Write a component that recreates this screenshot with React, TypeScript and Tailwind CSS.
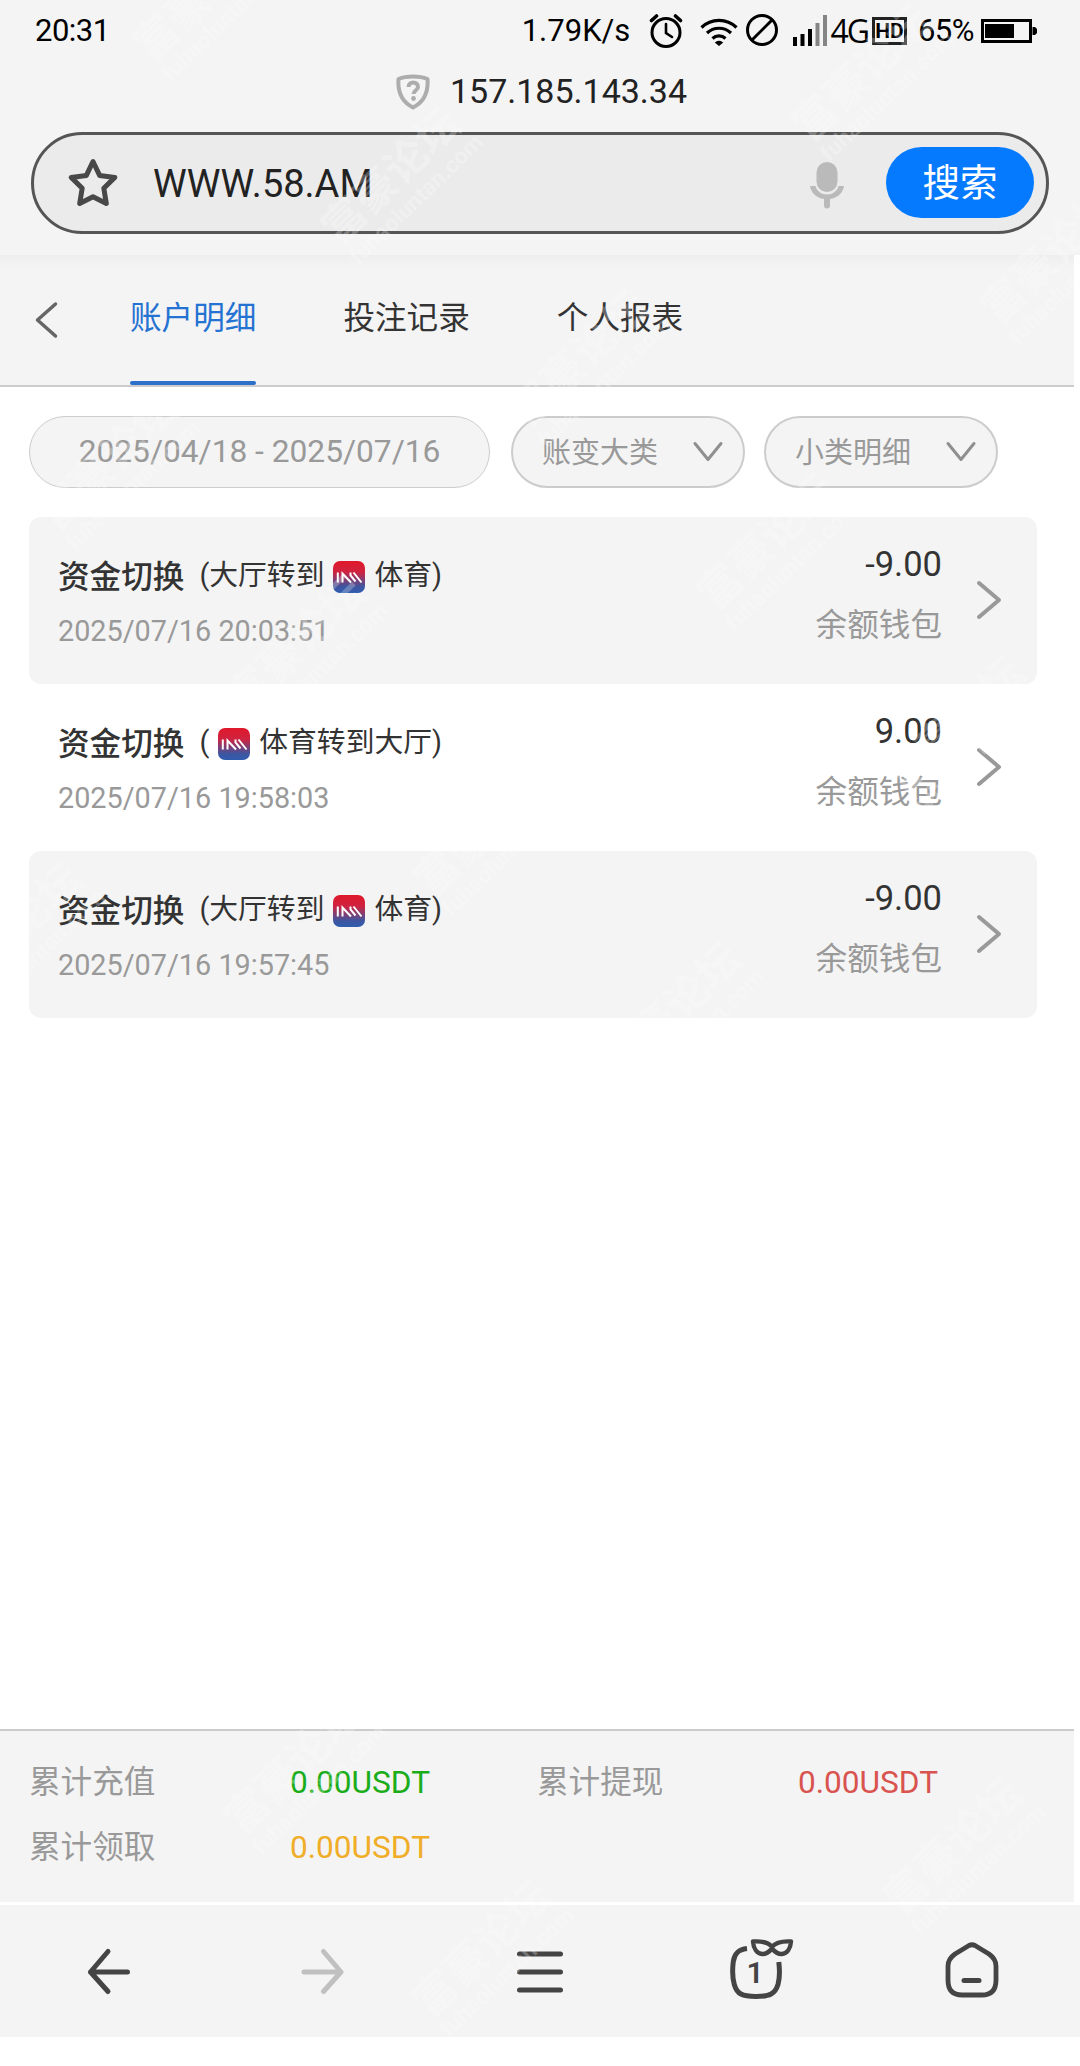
const records = [
  { from: '大厅转到', to: '体育', time: '2025/07/16 20:03:51', amount: '-9.00' },
  { from: '', to: '体育转到大厅', time: '2025/07/16 19:58:03', amount: '9.00' },
  { from: '大厅转到', to: '体育', time: '2025/07/16 19:57:45', amount: '-9.00' },
];

const tabs = ['账户明细', '投注记录', '个人报表'];

const totals = [
  { label: '累计充值', value: '0.00USDT', color: 'text-[#1aad19]' },
  { label: '累计提现', value: '0.00USDT', color: 'text-[#d9534f]' },
  { label: '累计领取', value: '0.00USDT', color: 'text-[#f0ad27]' },
];

// Diagonal watermark grid, skipped where the page is plain white
const marks: { x: number; y: number }[] = [];
for (let a = -5; a <= 3; a++) {
  for (let b = -2; b <= 10; b++) {
    const x = 313 + a * 471 + b * 188;
    const y = 219 - a * 103 + b * 183;
    const blank = y > 1130 && y < 1720;
    if (x > -130 && x < 1050 && y > 20 && y < 2080 && !blank) marks.push({ x, y });
  }
}

const StatusBar = () => (
  <div className="flex h-[62px] items-center pl-[35px] pr-[43px] text-[31px] leading-[62px] text-black">
    <span className="tracking-[-0.5px]">20:31</span>
    <span className="ml-auto">1.79K/s</span>
    <svg className="ml-[19px]" width="34" height="34" viewBox="0 0 34 34" fill="none" stroke="currentColor" strokeWidth="3" strokeLinecap="round">
      <circle cx="17" cy="18.5" r="14" />
      <path d="M17 10v9l6 4" strokeWidth="2.6" />
      <path d="M2.5 6.5l5-4.5M31.5 6.5l-5-4.5" strokeWidth="3.6" />
    </svg>
    <svg className="ml-[17px]" width="38" height="30" viewBox="0 0 38 30" fill="none" stroke="currentColor" strokeWidth="3.2">
      <path d="M1.5 11.5a25 25 0 0 1 35 0" />
      <path d="M7 17a17.500 17.500 0 0 1 24 0" />
      <path d="M12.500 22.500a9.500 9.500 0 0 1 13 0" />
      <path d="M16 26.500q3-2 6 0l-3 2.500z" fill="currentColor" strokeWidth="1.500" />
    </svg>
    <svg className="ml-[7px] mt-[-2px]" width="34" height="34" viewBox="0 0 34 34" fill="none" stroke="currentColor" strokeWidth="3">
      <circle cx="17" cy="17" r="14.500" />
      <path d="M7 27L27 7" />
    </svg>
    <svg className="ml-[14px] mt-[-2px]" width="35" height="32" viewBox="0 0 35 32">
      <path d="M0 23h4v9H0zM7.500 20h4v12h-4zM15 15h4v17h-4z" />
      <path d="M22.500 9h4v23h-4zM30 1h4v31h-4z" fill="#858585" />
    </svg>
    <span className="ml-[2px] font-['Open_Sans'] text-[32px] font-medium tracking-[-2px]">4G</span>
    <span className="ml-[4px] mt-[-1px] flex h-[28px] w-[35px] items-center justify-center border-[3px] border-[#222] text-[21px] font-bold leading-[22px]">
      HD
    </span>
    <span className="ml-[11px] tracking-[-0.5px]">65%</span>
    <svg className="ml-[7px]" width="56" height="24" viewBox="0 0 56 24">
      <rect x="1.500" y="1.500" width="48" height="21" fill="none" stroke="currentColor" strokeWidth="3" />
      <path d="M4 5h29v14H4zM51.500 8H54l2 2v4l-2 2h-2.500z" />
    </svg>
  </div>
);

const AddressBar = () => (
  <div className="mx-[31px] mt-[14px] flex h-[102px] w-[1018px] items-center rounded-full border-[3px] border-[#555] bg-[#ebebeb] pl-[33px] pr-[12px]">
    <svg width="52" height="52" viewBox="0 0 52 52" fill="none" stroke="#484848" strokeWidth="5" strokeLinejoin="round">
      <path d="M26 4.500l6.600 13.900 15.200 2-11 10.800 2.500 15.300L26 39.700 12.700 46.500l2.500-15.300-11-10.800 15.200-2z" />
    </svg>
    <span className="ml-[34px] mt-[1px] text-[38px] leading-[46px] text-[#222]">WWW.58.AM</span>
    <svg className="ml-auto mt-[3px]" width="36" height="48" viewBox="0 0 36 48" fill="#bababa">
      <rect x="7.500" y="1" width="21" height="30" rx="10.500" />
      <path d="M1 25h5.500c1.500 5.500 6 8.500 11.500 8.500S28 30.500 29.500 25H35c-1 7-6.500 12-14 13v6.500a2.500 2.500 0 0 1-6 0V38C7.500 37 2 32 1 25z" />
    </svg>
    <button className="ml-[41px] mt-[-1px] h-[71px] w-[148px] rounded-full bg-[#057aff] text-[37.500px] leading-[62px] text-white">
      搜索
    </button>
  </div>
);

const TabHeader = () => (
  <div className="w-[1074px] border-b-2 border-[#ccc] bg-[#f4f4f4]">
    <div className="flex h-[130px] bg-gradient-to-b from-[#eeeeee] to-[#f4f4f4] to-10% pl-[34px]">
      <svg className="mt-[46px]" width="26" height="38" viewBox="0 0 26 38" fill="none" stroke="#666" strokeWidth="3.500" strokeLinecap="round" strokeLinejoin="round">
        <path d="M21.500 3L3.500 19l18 16" />
      </svg>
      <nav className="ml-[70px] flex gap-[87px]">
        {tabs.map((tab, i) => (
          <div
            key={tab}
            className={
              i === 0
                ? 'relative h-[130px] text-[31.600px] leading-[127px] text-[#2472d2]'
                : 'h-[130px] text-[31.600px] leading-[127px] text-[#333]'
            }
          >
            {tab}
            {i === 0 && <span className="absolute inset-x-0 bottom-0 h-[4px] rounded-full bg-[#2b70c9]"></span>}
          </div>
        ))}
      </nav>
    </div>
  </div>
);

const Select = ({ label }: { label: string }) => (
  <div className="flex h-[72px] w-[234px] items-center justify-between rounded-full border-2 border-[#ccc] bg-[#f4f4f4] pl-[29px] pr-[19px] text-[29px] leading-[68px] text-[#999]">
    <span className="mt-[1px]">{label}</span>
    <svg width="32" height="22" viewBox="0 0 32 22" fill="none" stroke="#8f8f8f" strokeWidth="3" strokeLinecap="round" strokeLinejoin="round">
      <path d="M3 2.500L16 18.500 29 2.500" />
    </svg>
  </div>
);

const SportLogo = () => (
  <svg className="mx-[9px] mt-[3px]" width="32" height="32" viewBox="0 0 32 32" fill="none">
    <defs>
      <linearGradient id="sport" x1="0" y1="0" x2="0" y2="1">
        <stop offset="0" stopColor="#e0182a" />
        <stop offset="0.350" stopColor="#cf2340" />
        <stop offset="0.800" stopColor="#3f559f" />
        <stop offset="1" stopColor="#2f5db0" />
      </linearGradient>
    </defs>
    <rect width="32" height="32" rx="7" fill="url(#sport)" />
    <path d="M4.800 11.500v10M9.500 21.500v-9l8.500 9M18 21.500M17.500 11.500v3l5 6M20.500 11.500l8 10" stroke="#fff" strokeWidth="2" />
  </svg>
);

const App = () => {
  return (
    <div className="relative flex h-[2066px] w-[1080px] flex-col overflow-hidden bg-white font-[Roboto,'Noto_Sans_CJK_SC',sans-serif]">
      <header className="h-[255px] bg-[#f4f4f4]">
        <StatusBar />
        <div className="flex h-[56px] items-center justify-center pl-[3px] pt-[2px] text-[34px] leading-[56px] text-[#222]">
          <svg className="mr-[20px] mt-[1px]" width="34" height="36" viewBox="0 0 34 36" fill="none" stroke="#adadad" strokeWidth="4">
            <path d="M17 2.500c5 0 10 .6 14.500 2.500C32.500 18 28 28 17 33.500 6 28 1.500 18 2.500 5 7 3.100 12 2.500 17 2.500z" strokeLinejoin="round" />
            <path d="M12.500 13c0-6 9.500-6 9.500 0 0 3-4.500 3.500-4.500 7" />
            <circle cx="17.500" cy="24.500" r="2.400" fill="#adadad" stroke="none" />
          </svg>
          <span>157.185.143.34</span>
        </div>
        <AddressBar />
      </header>

      <TabHeader />

      <main className="flex-1 pl-[29px]">
        {/* Filters */}
        <div className="flex pt-[29px]">
          <div className="mr-[21px] h-[72px] w-[461px] rounded-full border border-[#ccc] bg-[#f4f4f4] text-center text-[31.700px] leading-[69px] text-[#999]">
            2025/04/18 - 2025/07/16
          </div>
          <Select label="账变大类" />
          <div className="w-[19px]"></div>
          <Select label="小类明细" />
        </div>

        {/* Records */}
        <div className="mt-[29px] w-[1008px]">
          {records.map((r, i) => (
            <div
              key={r.time}
              className={
                i % 2 === 0
                  ? 'flex h-[167px] rounded-xl bg-[#f4f4f4] pl-[29px] pr-[34px]'
                  : 'flex h-[167px] rounded-xl pl-[29px] pr-[34px]'
              }
            >
              <div className="flex-1">
                <div className="mt-[36px] flex h-[44px] items-center text-[28.800px] leading-[44px] text-[#333]">
                  <span className="mr-[15px] mt-[5px] text-[31.600px] font-medium">资金切换</span>
                  <span>({r.from}</span>
                  <SportLogo />
                  <span>{r.to})</span>
                </div>
                <div className="mt-[14px] text-[28.800px] leading-[40px] text-[#999]">{r.time}</div>
              </div>
              <div className="text-right">
                <div className="mt-[27px] text-[34.500px] leading-[40px] text-[#333]">{r.amount}</div>
                <div className="mt-[18px] text-[31.600px] leading-[48px] text-[#999]">余额钱包</div>
              </div>
              <svg className="ml-[33px] mt-[62px]" width="28" height="42" viewBox="0 0 28 42" fill="none" stroke="#999" strokeWidth="4" strokeLinecap="round" strokeLinejoin="round">
                <path d="M4 4l20 17L4 38" />
              </svg>
            </div>
          ))}
        </div>
      </main>

      {/* Totals */}
      <div className="grid h-[173px] w-[1074px] grid-cols-[261px_247px_261px_1fr] content-start border-t-2 border-[#ccc] bg-[#f4f4f4] pl-[29px] pt-[19px] text-[31.600px] leading-[65px] text-[#999]">
        {totals.map((t) => (
          <div key={t.label} className="contents">
            <span>{t.label}</span>
            <span className={t.color}>{t.value}</span>
          </div>
        ))}
      </div>

      {/* Browser toolbar */}
      <footer className="mb-[29px] mt-[3px] grid h-[132px] grid-cols-5 place-items-center bg-[#f4f4f4] text-[#444]">
        <svg width="46" height="64" viewBox="0 0 46 64" fill="none" stroke="currentColor" strokeWidth="5" strokeLinecap="round" strokeLinejoin="round">
          <path d="M23 12.500L5.500 33 23 52.500M5.500 33h37" />
        </svg>
        <svg width="46" height="64" viewBox="0 0 46 64" fill="none" stroke="#c0c0c0" strokeWidth="5" strokeLinecap="round" strokeLinejoin="round">
          <path d="M22.500 12.500L40 33 22.500 52.500M40 33H3" />
        </svg>
        <svg width="48" height="64" viewBox="0 0 48 64" fill="none" stroke="currentColor" strokeWidth="5" strokeLinecap="round">
          <path d="M3.500 15h41M3.500 33h41M3.500 51h41" />
        </svg>
        <svg className="ml-[10px]" width="66" height="64" viewBox="0 0 66 64" fill="none" stroke="currentColor" strokeWidth="5">
          <path d="M19 9.500C10 10.500 6.500 15 5.300 22.500c-1 8-1 16 1 23C9 55 14 57.500 28 57.500S47 55 50 45.500c2-7 1.800-14 .8-22.500" />
          <path d="M25 2.500c8-.5 15 .5 19 5.500 4-5 11-6 19-5.500-.5 7-4 12-9 12.500-4 .3-7.500-2.500-10-5.500-2.500 3-6 5.800-10 5.500-5-.5-8.500-5.500-9-12.500z" strokeWidth="4.400" strokeLinejoin="round" />
          <text x="27" y="43.500" textAnchor="middle" fontSize="30" fontWeight="600" fill="currentColor" stroke="none">1</text>
        </svg>
        <svg width="54" height="64" viewBox="0 0 54 64" fill="none" stroke="currentColor" strokeWidth="4.800" strokeLinecap="round" strokeLinejoin="round">
          <path d="M24 6.500q3-1.500 6 0l14 8.500q7 5 7 12v14q0 15-14 15H17Q3 56 3 41V27q0-7 7-12z" />
          <path d="M19 41.500h15" strokeWidth="5" />
        </svg>
      </footer>

      {/* Watermark */}
      <div className="pointer-events-none absolute inset-0 overflow-hidden" aria-hidden="true">
        {marks.map((m) => (
          <div
            key={`${m.x},${m.y}`}
            className="absolute origin-top-left rotate-[-44deg] whitespace-nowrap font-bold text-white/25"
            style={{ left: m.x, top: m.y }}
          >
            <div className="text-[43px] leading-[46px]">富豪论坛</div>
            <div className="text-[23px] leading-[24px]">fuhaoluntan.com</div>
          </div>
        ))}
      </div>
    </div>
  );
};

export default App;
